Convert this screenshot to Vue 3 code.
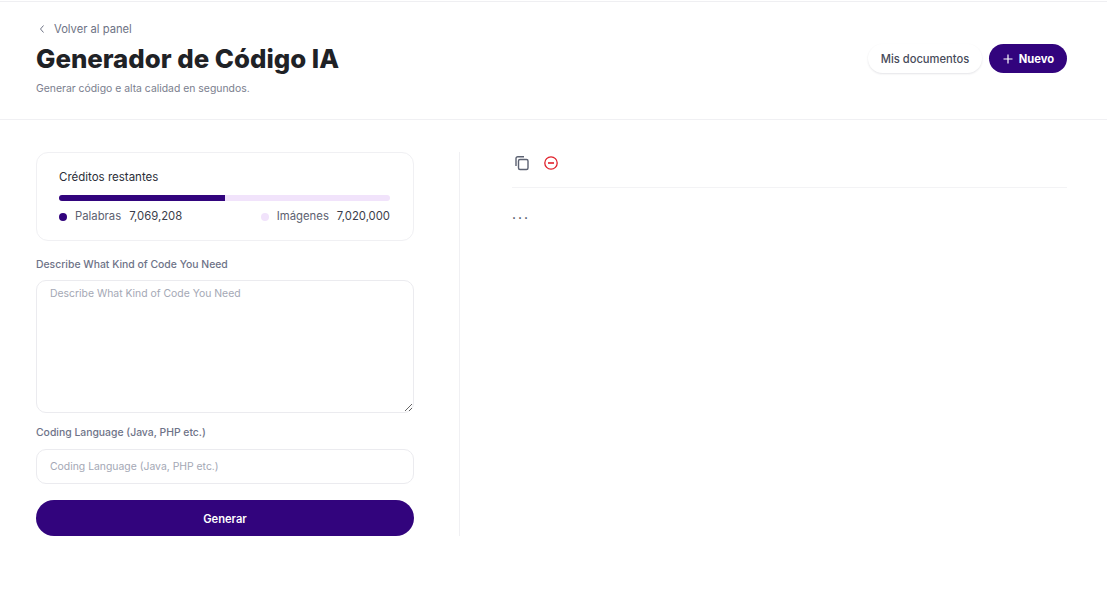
<template>
  <div class="page">
    <header class="header">
      <div class="titles">
        <a class="back">
          <svg width="12" height="12" viewBox="0 0 12 12" fill="none" stroke="#6e7385" stroke-width="1"><path d="M7.5 2.5 4.5 6l3 3.5" /></svg>
          <span>Volver al panel</span>
        </a>
        <h1>Generador de Código IA</h1>
        <p class="subtitle">Generar código e alta calidad en segundos.</p>
      </div>
      <div class="actions">
        <button class="btn-light">Mis documentos</button>
        <button class="btn-new">
          <svg width="12" height="12" viewBox="0 0 12 12" fill="none" stroke="#fff" stroke-width="1.2"><path d="M6 1.5v9M1.5 6h9" /></svg>
          Nuevo
        </button>
      </div>
    </header>

    <main class="content">
      <section class="form-col">
        <div class="credits">
          <div class="credits-title">Créditos restantes</div>
          <div class="bar"><div class="bar-fill" :style="{ width: wordsShare + '%' }"></div></div>
          <div class="legend">
            <div class="legend-item">
              <i class="dot dot-dark"></i>
              <span class="legend-label">Palabras</span>
              <span>{{ words }}</span>
            </div>
            <div class="legend-item">
              <i class="dot dot-light"></i>
              <span class="legend-label">Imágenes</span>
              <span>{{ images }}</span>
            </div>
          </div>
        </div>

        <label class="label first">Describe What Kind of Code You Need</label>
        <textarea class="field area" placeholder="Describe What Kind of Code You Need"></textarea>

        <label class="label second">Coding Language (Java, PHP etc.)</label>
        <input class="field line" placeholder="Coding Language (Java, PHP etc.)" />

        <button class="generate">Generar</button>
      </section>

      <section class="result-col">
        <div class="tools">
          <svg width="18" height="18" viewBox="0 0 18 18" fill="none" stroke="#5c6272" stroke-width="1.4">
            <rect x="5.5" y="5.5" width="9.5" height="10" rx="1.5" />
            <path d="M3 12V4.5A1.8 1.8 0 0 1 4.8 2.7H11" />
          </svg>
          <svg width="16" height="16" viewBox="0 0 16 16" fill="none" stroke="#e0202a" stroke-width="1.3">
            <circle cx="8" cy="8" r="6.2" />
            <path d="M5 8h6" stroke-width="1.6" />
          </svg>
        </div>
        <div class="output">...</div>
      </section>
    </main>
  </div>
</template>

<script setup>
const words = '7,069,208'
const images = '7,020,000'
const wordsShare = 50.2
</script>

<style>
html,
body {
  background: #fff;
}
</style>

<style scoped>
.page {
  min-height: 597px;
  background: #fff;
  padding-top: 1px;
  box-sizing: border-box;
  font-family: Inter, 'Liberation Sans', sans-serif;
  color: #1f2226;
}

.header {
  height: 119px;
  box-sizing: border-box;
  padding: 18px 40px 0 36px;
  display: flex;
  justify-content: space-between;
  align-items: flex-start;
  border-top: 1px solid #efeff2;
  border-bottom: 1px solid #f0f0f3;
}

.back {
  display: flex;
  align-items: center;
  gap: 6px;
  height: 18px;
  font-size: 11.2px;
  color: #6e7385;
}

h1 {
  margin: 4px 0 0;
  font-size: 25.8px;
  line-height: 33px;
  font-weight: 800;
  color: #1f2226;
}

.subtitle {
  margin: 7px 0 0;
  font-size: 10.4px;
  line-height: 14px;
  color: #7a7e8e;
}

.actions {
  display: flex;
  gap: 7px;
  margin-top: 24px;
}

.actions button {
  height: 29px;
  border: none;
  border-radius: 15px;
  font-family: inherit;
  font-size: 11.2px;
}

.btn-light {
  width: 114px;
  background: #fff;
  color: #474b5a;
  font-weight: 500;
  box-shadow: 0 1px 2px rgba(30, 30, 60, 0.12);
}

.btn-new {
  width: 78px;
  background: #32047d;
  color: #fff;
  font-weight: 700;
  display: flex;
  align-items: center;
  justify-content: center;
  gap: 5px;
}

.content {
  display: flex;
  padding: 32px 40px 0 36px;
}

.form-col {
  width: 378px;
  padding-right: 45px;
  border-right: 1px solid #f0f0f3;
  display: flex;
  flex-direction: column;
  height: 384px;
}

.credits {
  height: 89px;
  box-sizing: border-box;
  border: 1px solid #f0f0f3;
  border-radius: 12px;
  padding: 17px 23px 0 22px;
}

.credits-title {
  font-size: 11.5px;
  line-height: 14px;
  color: #2b2e38;
}

.bar {
  height: 6px;
  margin-top: 11px;
  border-radius: 3px;
  background: #f1e3fb;
  overflow: hidden;
}

.bar-fill {
  height: 100%;
  background: #32047d;
}

.legend {
  display: flex;
  justify-content: space-between;
  margin-top: 8px;
  font-size: 11.3px;
  line-height: 15px;
  color: #3a3d4a;
}

.legend-item {
  display: flex;
  align-items: center;
}

.legend-label {
  color: #5d6170;
  margin-right: 8px;
}

.dot {
  width: 8px;
  height: 8px;
  border-radius: 50%;
  margin-right: 8px;
}

.dot-dark {
  background: #32047d;
}

.dot-light {
  background: #f1e3fb;
}

.label {
  font-size: 10.4px;
  line-height: 14px;
  font-weight: 500;
  color: #6e7388;
}

.label.first {
  margin-top: 17px;
}

.label.second {
  margin-top: 13px;
}

.field {
  box-sizing: border-box;
  width: 100%;
  border: 1px solid #ebebef;
  border-radius: 10px;
  font-family: inherit;
  font-size: 10.4px;
  background: #fff;
  color: #1f2226;
  outline: none;
}

.field::placeholder {
  color: #a4a8b5;
  opacity: 1;
}

.area {
  display: block;
  height: 134px;
  margin-top: 8px;
  padding: 6px 13px;
}

.line {
  height: 35px;
  margin-top: 9px;
  padding: 0 13px;
}

.generate {
  height: 36px;
  margin-top: 16px;
  padding: 1px 0 0;
  border: none;
  border-radius: 18px;
  background: #32047d;
  color: #fff;
  font-family: inherit;
  font-size: 11.2px;
  font-weight: 600;
}

.result-col {
  flex: 1;
  padding-left: 52px;
}

.tools {
  display: flex;
  align-items: center;
  gap: 12px;
  padding-left: 1px;
  padding-bottom: 13px;
  height: 22px;
  border-bottom: 1px solid #f3f3f5;
}

.output {
  margin-top: 12px;
  font-size: 14px;
  line-height: 28px;
  letter-spacing: 2px;
  color: #444856;
}
</style>
